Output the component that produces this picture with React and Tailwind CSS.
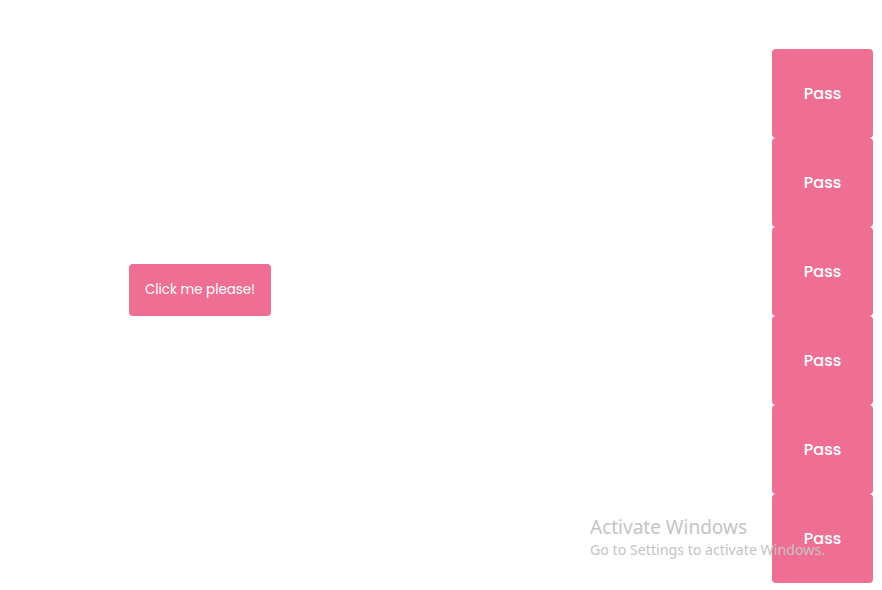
export default function App() {
    const rows = [0, 1, 2, 3, 4, 5];
    return (
        <div className="relative w-full h-[590px] bg-white flex overflow-hidden" style={{ fontFamily: 'Poppins, "Open Sans", Inter, sans-serif' }}>
            <div className="flex-1 pl-[129px] pt-[264px]">
                <button className="w-[142px] h-[52px] rounded-[4px] bg-[#ef6e93] text-white text-[13.4px] font-normal">
                    Click me please!
                </button>
            </div>
            <div className="pt-[49px] pr-[9px] flex flex-col">
                {rows.map((i) => (
                    <div key={i} className="w-[101px] h-[89px] rounded-[4px] bg-[#ef6e93] text-white text-[16px] font-medium flex items-center justify-center">
                        Pass
                    </div>
                ))}
            </div>
            <div className="absolute left-[590px] top-[514px] text-[#c4c4c4] pointer-events-none" style={{ fontFamily: '"Noto Sans", "Open Sans", sans-serif' }}>
                <div className="text-[19px] leading-[26px]">Activate Windows</div>
                <div className="text-[14.2px] leading-[19px]">Go to Settings to activate Windows.</div>
            </div>
        </div>
    );
}
